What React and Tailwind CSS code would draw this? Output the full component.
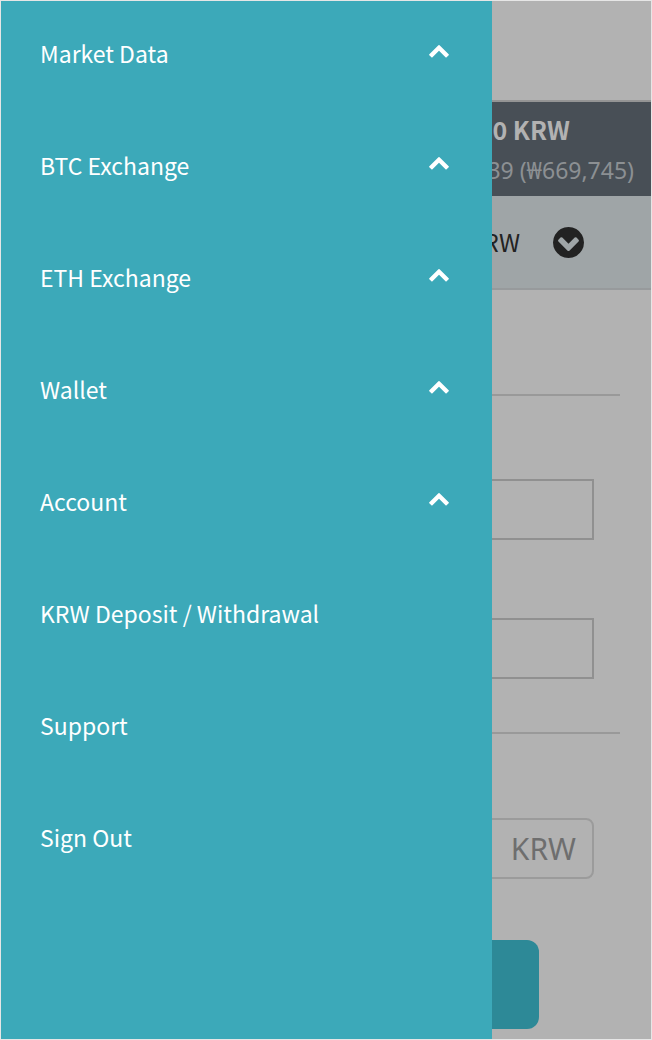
import React from "react";

const menu = [
  { label: "Market Data", group: true },
  { label: "BTC Exchange", group: true },
  { label: "ETH Exchange", group: true },
  { label: "Wallet", group: true },
  { label: "Account", group: true },
  { label: "KRW Deposit / Withdrawal" },
  { label: "Support" },
  { label: "Sign Out" },
];

function ChevronUp() {
  return (
    <svg viewBox="0 0 1792 1792" className="size-[22px] fill-white" aria-hidden="true">
      <path d="M1683 1331l-166 165q-19 19-45 19t-45-19l-531-531-531 531q-19 19-45 19t-45-19l-166-165q-19-19-19-45.5t19-45.5l742-741q19-19 45-19t45 19l742 741q19 19 19 45.5t-19 45.5z" />
    </svg>
  );
}

function ChevronCircleDown() {
  return (
    <svg viewBox="0 0 1536 1536" className="size-[31px] fill-[#222222]" aria-hidden="true">
      <path
        fillRule="evenodd"
        d="M813 1171l454-454q19-19 19-45t-19-45l-102-102q-19-19-45-19t-45 19l-307 307-307-307q-19-19-45-19t-45 19l-102 102q-19 19-19 45t19 45l454 454q19 19 45 19t45-19zM1536 768q0 209-103 385.500t-279.500 279.500-385.500 103-385.500-103-279.500-279.500-103-385.500 103-385.500 279.500-279.500 385.500-103 385.500 103 279.500 279.500 103 385.500z"
      />
    </svg>
  );
}

function Drawer() {
  return (
    <nav
      aria-label="Main menu"
      className="absolute inset-y-px left-px w-[491px] max-w-[80%] bg-[#3ca9b9] pl-[39px] pr-[42px] font-['Noto_Sans_CJK_KR',sans-serif] text-[23px] text-white"
    >
      <ul>
        {menu.map((item) => (
          <li key={item.label} className="h-28">
            {item.group ? (
              <button type="button" className="flex h-[104px] w-full items-center justify-between text-left">
                <span>{item.label}</span>
                <span className="pb-1.5">
                  <ChevronUp />
                </span>
              </button>
            ) : (
              <a href="#" className="flex h-[104px] items-center">
                {item.label}
              </a>
            )}
          </li>
        ))}
      </ul>
    </nav>
  );
}

export default function App() {
  return (
    <div className="relative flex min-h-screen flex-col bg-[#e6e6e6] p-px font-['Noto_Sans','Noto_Sans_CJK_KR',sans-serif]">
      <div className="flex grow flex-col bg-[#b2b2b2]">
        <header className="h-[101px] border-b-2 border-[#949494]" />

        <section className="flex h-[94px] flex-col items-end justify-center bg-[#484f56] pr-[17px] pt-0.5">
          <p className="pr-16 font-['Noto_Sans_CJK_KR',sans-serif] text-[25px]/10 font-bold text-[#b2b2b2]">0 KRW</p>
          <p className="text-[23px]/[42px] text-[#8c9093]">39 (₩669,745)</p>
        </section>

        <div className="flex h-[94px] items-center justify-end border-b-2 border-[#979a9c] bg-[#9fa5a7] pr-[67px]">
          <button type="button" className="flex items-center gap-[33px] text-2xl text-[#222222]">
            <span className="font-['Noto_Sans_CJK_KR',sans-serif]">KRW</span>
            <ChevronCircleDown />
          </button>
        </div>

        <main className="px-[31px]">
          <form className="flex flex-col">
            <hr className="mt-[104px] border-t-2 border-[#999999]" />
            <div className="mt-[83px] flex flex-col gap-[78px] px-[26px]">
              <input aria-label="Price" className="h-[61px] border-2 border-[#909090] bg-transparent px-4" />
              <input aria-label="Amount" className="h-[61px] border-2 border-[#909090] bg-transparent px-4" />
            </div>
            <hr className="mt-[53px] border-t-2 border-[#999999]" />
            <label className="mx-[26px] mt-[84px] flex h-[61px] items-center rounded-lg border-2 border-[#9b9b9b] pr-4 text-3xl text-[#6e6e6e]">
              <input aria-label="Total" className="min-w-0 grow bg-transparent" />
              KRW
            </label>
            <button type="button" aria-label="Submit" className="mx-[81px] mb-[10px] mt-[61px] h-[89px] rounded-xl bg-[#2d8997]" />
          </form>
        </main>
      </div>
      <Drawer />
    </div>
  );
}
